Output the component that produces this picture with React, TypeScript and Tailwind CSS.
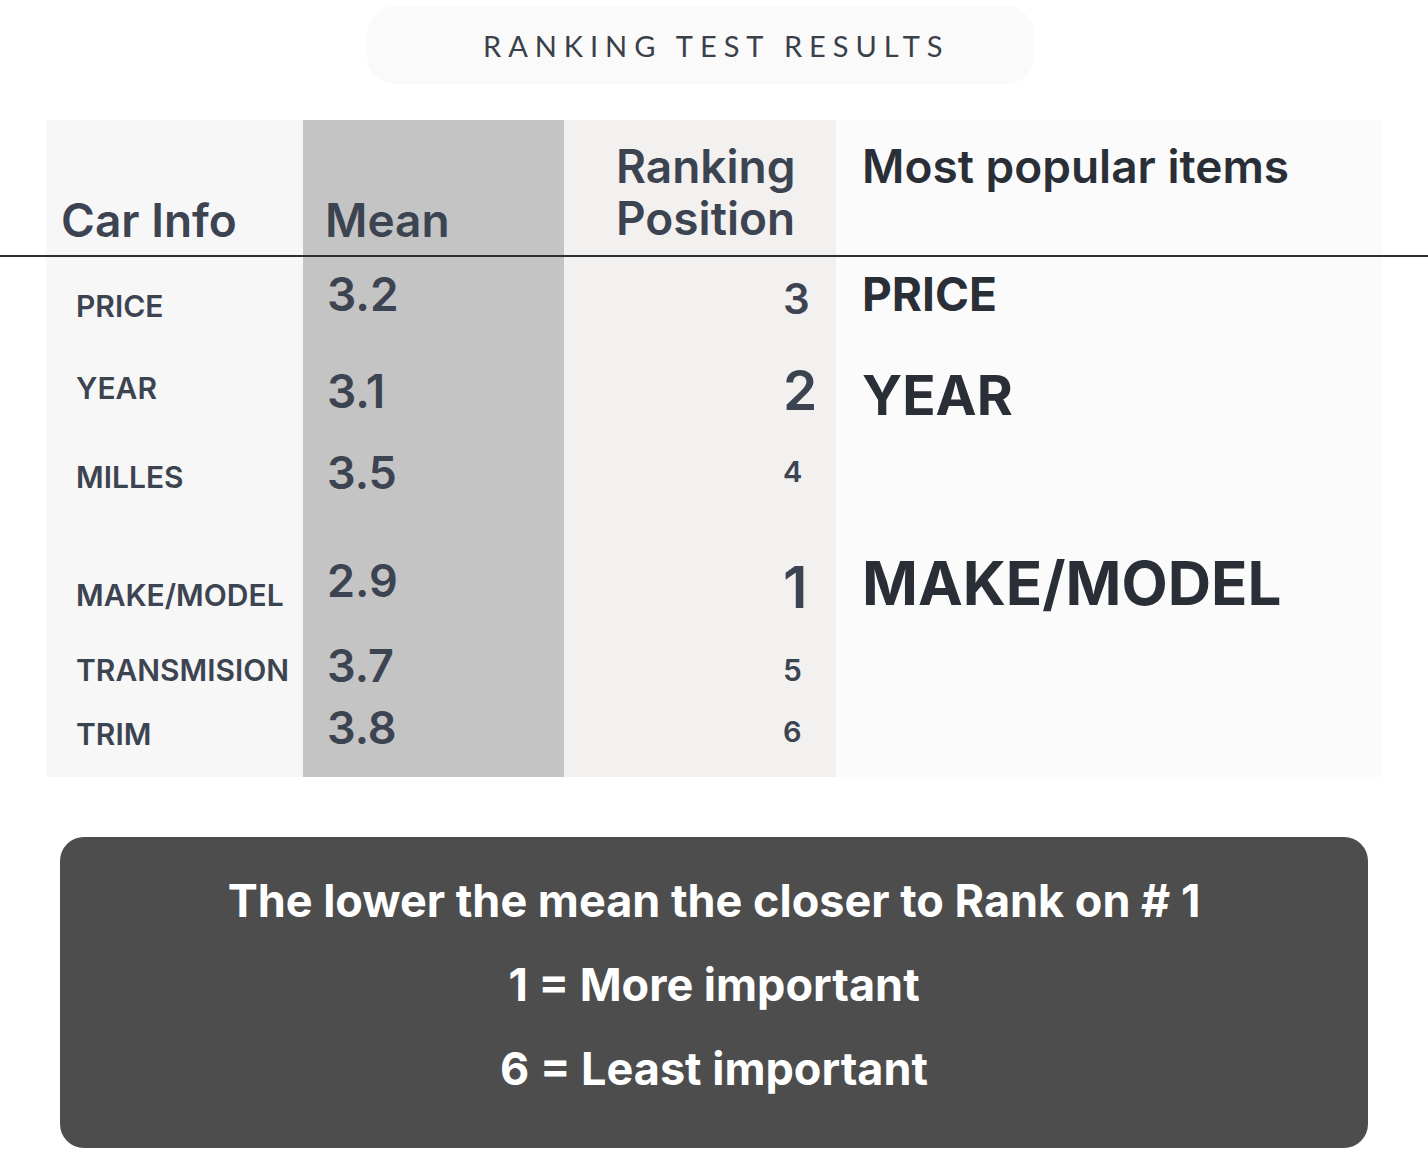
import React from "react";

type Row = {
  h: string;
  label: string;
  labelPt: string;
  mean: string;
  meanCls: string;
  rank: string;
  rankCls: string;
  pop?: string;
  popCls?: string;
};

const rows: Row[] = [
  { h: "h-[87px]", label: "PRICE", labelPt: "pt-[34px]", mean: "3.2", meanCls: "pt-[14px] text-[46px]", rank: "3", rankCls: "pt-[21px] text-[42px]", pop: "PRICE", popCls: "pt-[14px] text-[46px]" },
  { h: "h-[85px]", label: "YEAR", labelPt: "pt-[29px]", mean: "3.1", meanCls: "pt-[24px] text-[46px]", rank: "2", rankCls: "pt-[19px] text-[55px]", pop: "YEAR", popCls: "pt-[24px] text-[55px]" },
  { h: "h-[90px]", label: "MILLES", labelPt: "pt-[33px]", mean: "3.5", meanCls: "pt-[21px] text-[45px]", rank: "4", rankCls: "pt-[28px] text-[29px]" },
  { h: "h-[115px]", label: "MAKE/MODEL", labelPt: "pt-[61px]", mean: "2.9", meanCls: "pt-[39px] text-[45px]", rank: "1", rankCls: "pt-[39px] text-[58px]", pop: "MAKE/MODEL", popCls: "pt-[34px] text-[60px]" },
  { h: "h-[65px]", label: "TRANSMISION", labelPt: "pt-[21px]", mean: "3.7", meanCls: "pt-[9px] text-[45px]", rank: "5", rankCls: "pt-[21px] text-[30px]" },
  { h: "h-[78px]", label: "TRIM", labelPt: "pt-[20px]", mean: "3.8", meanCls: "pt-[6px] text-[45px]", rank: "6", rankCls: "pt-[18px] text-[29px]" },
];

export default function App() {
  return (
    <div
      className="w-[1428px] h-[1149px] bg-white flex flex-col overflow-hidden"
      style={{ fontFamily: "Inter, 'Noto Sans', sans-serif" }}
    >
      {/* Title */}
      <div className="pt-[6px] pl-[367px]">
        <div className="w-[667px] h-[78px] rounded-[28px] bg-[#fafafa] flex items-center pl-[116px]">
          <span
            className="text-[29px] tracking-[0.24em] text-[#3a404a] leading-none"
            style={{ fontFamily: "Lato, 'Open Sans', sans-serif" }}
          >
            RANKING TEST RESULTS
          </span>
        </div>
      </div>

      {/* Table header */}
      <div className="mt-[36px] ml-[46px] w-[1336px] grid grid-cols-[257px_261px_272px_546px] h-[135px] text-[46px] font-semibold leading-[52px] text-[#3d4451]">
        <div className="bg-[#f7f7f7] pl-[15px] pt-[74px]">Car Info</div>
        <div className="bg-[#c4c4c4] pl-[22px] pt-[74px]">Mean</div>
        <div className="bg-[#f3f0f0] pl-[52px] pt-[20px]">
          Ranking
          <br />
          Position
        </div>
        <div className="bg-[#fbfbfb] pl-[26px] pt-[20px] text-[#2a2f37]">Most popular items</div>
      </div>

      <div className="w-full h-[2px] bg-[#2f2f2f]" />

      {/* Table body */}
      <div className="ml-[46px] w-[1336px] flex flex-col">
        {rows.map((r) => (
          <div key={r.label} className={`grid grid-cols-[257px_261px_272px_546px] ${r.h}`}>
            <div className={`bg-[#f7f7f7] pl-[30px] text-[30px] font-semibold leading-none text-[#3d4451] ${r.labelPt}`}>
              {r.label}
            </div>
            <div className={`bg-[#c4c4c4] pl-[24px] font-semibold leading-none text-[#3d4451] ${r.meanCls}`}>
              {r.mean}
            </div>
            <div className={`bg-[#f3f0f0] pl-[219px] font-semibold leading-none text-[#3d4451] ${r.rankCls}`}>
              {r.rank}
            </div>
            <div className={`bg-[#fbfbfb] pl-[26px] font-bold leading-none text-[#2a2f37] ${r.popCls ?? ""}`}>
              {r.pop ?? ""}
            </div>
          </div>
        ))}
      </div>

      {/* Legend */}
      <div className="mt-[60px] ml-[60px] w-[1308px] h-[311px] rounded-[24px] bg-[#4d4d4d] pt-[22px] flex flex-col items-center text-white text-[45px] font-bold leading-[84px]">
        <div>The lower the mean the closer to Rank on # 1</div>
        <div>1 = More important</div>
        <div>6 = Least important</div>
      </div>
    </div>
  );
}
